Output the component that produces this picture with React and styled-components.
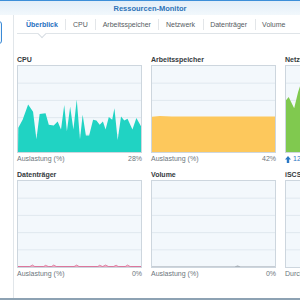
import React from 'react';
import styled, { createGlobalStyle } from 'styled-components';

const Global = createGlobalStyle`
  html, body { margin: 0; padding: 0; background: #fff; overflow: hidden; }
  body { font-family: "Liberation Sans", Arial, sans-serif; }
`;

const Window = styled.div`
  width: 300px;
  height: 300px;
  box-sizing: border-box;
  display: flex;
  flex-direction: column;
  border-top: 1px solid #3d8fd9;
  border-bottom: 2px solid #8da2b3;
  overflow: hidden;
  background: #fff;
`;

const TitleBar = styled.div`
  height: 14px;
  flex: none;
  display: flex;
  align-items: center;
  justify-content: center;
  background: linear-gradient(#e2eef9, #f2f8fc);
  font-size: 7.5px;
  font-weight: bold;
  color: #2d73b8;
`;

const Body = styled.div`
  flex: 1;
  display: flex;
  min-height: 0;
`;

const Sidebar = styled.div`
  width: 13px;
  flex: none;
  border-right: 1px solid #e1e6ea;
  padding-top: 6px;
  overflow: hidden;
`;

const SideItem = styled.div`
  margin-left: -20px;
  width: 20px;
  height: 21px;
  border: 1.5px solid #3b8ad6;
  border-radius: 3px;
  background: #eef6fd;
`;

const Main = styled.div`
  flex: 1;
  min-width: 0;
  padding-left: 3px;
  overflow: hidden;
`;

const Tabs = styled.div`
  display: flex;
  height: 18px;
  padding-left: 1.5px;
  border-bottom: 1px solid #dfe4e8;
`;

const Tab = styled.div`
  position: relative;
  height: 18px;
  display: flex;
  align-items: center;
  padding: 0 7.5px;
  font-size: 7px;
  white-space: nowrap;
  color: ${p => (p.$active ? '#1f6fc0' : '#555b61')};
  font-weight: ${p => (p.$active ? 'bold' : 'normal')};

  &::before {
    content: '';
    display: ${p => (p.$first ? 'none' : 'block')};
    position: absolute;
    left: 0;
    top: 4px;
    bottom: 3px;
    width: 1px;
    background: #e3e6e9;
  }

  &::after {
    content: '';
    display: ${p => (p.$active ? 'block' : 'none')};
    position: absolute;
    left: 50%;
    bottom: -4px;
    width: 5px;
    height: 5px;
    transform: translateX(-50%) rotate(45deg);
    background: #fff;
    border-right: 1px solid #d6dce2;
    border-bottom: 1px solid #d6dce2;
  }
`;

const Grid = styled.div`
  display: grid;
  grid-template-columns: repeat(3, 125px);
  column-gap: 9px;
  row-gap: 5px;
  padding-top: 21px;
`;

const Card = styled.div`
  display: flex;
  flex-direction: column;
  min-width: 0;
`;

const CardTitle = styled.div`
  font-size: 7px;
  font-weight: bold;
  color: #343a40;
  line-height: 10px;
  white-space: nowrap;
`;

const Chart = styled.div`
  height: 88px;
  box-sizing: border-box;
  border: 1px solid #cdd6de;
  background: #f3f8fc;

  svg { display: block; width: 100%; height: 100%; }
`;

const Footer = styled.div`
  display: flex;
  justify-content: space-between;
  align-items: center;
  font-size: 7px;
  line-height: 12px;
  color: #6c757d;
  white-space: nowrap;
`;

const Rate = styled.span`
  display: flex;
  align-items: center;
  gap: 2px;
  color: #2a78c5;
`;

const cpuPts = [
  [0.3, 63.3], [4.7, 55], [10.3, 39.3], [15.3, 46.7], [18.7, 75], [22, 49], [28, 48.3],
  [31.3, 60], [36.3, 61], [40.3, 56.7], [43.7, 65], [47, 40], [49.7, 66.7], [53, 41.7],
  [56.3, 65], [59.7, 34.3], [63, 75], [65.7, 50], [69, 71], [72.3, 71], [76.3, 55],
  [79.7, 55.7], [83, 60], [86.3, 56.7], [89, 65], [92.3, 52.3], [95.7, 55], [98, 43.3],
  [101.3, 75.7], [104.7, 51.7], [108, 55.7], [111.3, 54], [116.3, 65], [120.3, 53.3], [125, 61.7],
];

const netPts = [
  [0, 35], [2.7, 31.7], [8.3, 43.3], [12.3, 26.7], [15, 18.3], [20, 28], [26, 22], [32, 35],
  [38, 24], [45, 30], [55, 26], [65, 34], [75, 27], [90, 31], [105, 25], [125, 30],
];

const diskPts = [
  [0, 87.5], [12, 87.5], [14.7, 86], [17, 87.5], [26, 87.5], [28, 86.3], [31, 87.5],
  [34, 87.5], [36.3, 86], [39, 87.5], [57, 87.5], [59.7, 86], [62, 87.5], [81, 87.5],
  [83, 86.2], [86, 87.5], [89, 86], [92, 87.5], [97, 87.5], [99.7, 86.2], [102, 87.5],
  [109, 87.5], [111.3, 86], [114, 87.5], [125, 87.5],
];

const volPts = [[0, 88], [84, 88], [87, 86.8], [90, 88], [125, 88]];

const toStr = pts => pts.map(([x, y]) => `${x},${y}`).join(' ');

function GridLines() {
  return (
    <g stroke="#dbe4ec" strokeWidth="0.8">
      {[17.6, 35.2, 52.8, 70.4].map(y => (
        <line key={y} x1="0" x2="125" y1={y} y2={y} />
      ))}
    </g>
  );
}

function AreaChart({ pts, fill, stroke }) {
  return (
    <Chart>
      <svg viewBox="0 0 125 88" preserveAspectRatio="none">
        <GridLines />
        {pts && (
          <polygon points={`${toStr(pts)} 125,88 0,88`} fill={fill} stroke={stroke || 'none'} strokeWidth="0.6" />
        )}
      </svg>
    </Chart>
  );
}

function UpArrow() {
  return (
    <svg width="6" height="7" viewBox="0 0 6 7">
      <path d="M3 0 L6 3.5 L4.2 3.5 L4.2 7 L1.8 7 L1.8 3.5 L0 3.5 Z" fill="#2a78c5" />
    </svg>
  );
}

export default function App() {
  const tabs = ['Überblick', 'CPU', 'Arbeitsspeicher', 'Netzwerk', 'Datenträger', 'Volume'];
  return (
    <>
      <Global />
      <Window>
        <TitleBar>Ressourcen-Monitor</TitleBar>
        <Body>
          <Sidebar>
            <SideItem />
          </Sidebar>
          <Main>
            <Tabs>
              {tabs.map((t, i) => (
                <Tab key={t} $active={i === 0} $first={i === 0}>{t}</Tab>
              ))}
            </Tabs>
            <Grid>
              <Card>
                <CardTitle>CPU</CardTitle>
                <AreaChart pts={cpuPts} fill="#20d3c3" />
                <Footer><span>Auslastung (%)</span><span>28%</span></Footer>
              </Card>
              <Card>
                <CardTitle>Arbeitsspeicher</CardTitle>
                <AreaChart pts={[[0, 52], [8, 51.2], [20, 51.6], [125, 51.7]]} fill="#fdc85c" />
                <Footer><span>Auslastung (%)</span><span>42%</span></Footer>
              </Card>
              <Card>
                <CardTitle>Netzwerk</CardTitle>
                <AreaChart pts={netPts} fill="#80c94f" />
                <Footer><Rate><UpArrow />12 KB/s</Rate><span></span></Footer>
              </Card>
              <Card>
                <CardTitle>Datenträger</CardTitle>
                <AreaChart pts={diskPts} fill="#f2c9d6" stroke="#d2497c" />
                <Footer><span>Auslastung (%)</span><span>0%</span></Footer>
              </Card>
              <Card>
                <CardTitle>Volume</CardTitle>
                <AreaChart pts={volPts} fill="#b9c0c6" stroke="#9aa3ab" />
                <Footer><span>Auslastung (%)</span><span>0%</span></Footer>
              </Card>
              <Card>
                <CardTitle>iSCSI</CardTitle>
                <AreaChart />
                <Footer><span>Durchsatz</span><span></span></Footer>
              </Card>
            </Grid>
          </Main>
        </Body>
      </Window>
    </>
  );
}
